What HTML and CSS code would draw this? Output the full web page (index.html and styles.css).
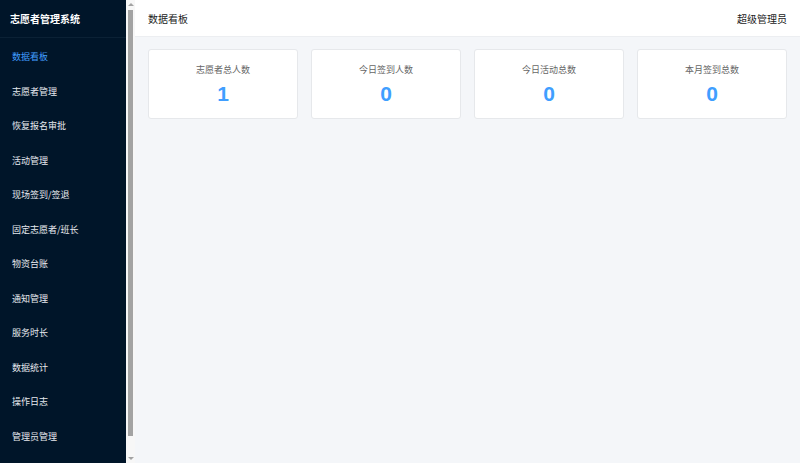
FILE: index.html
```html
<!DOCTYPE html>
<html lang="zh-CN">
<head>
  <meta charset="UTF-8" />
  <meta name="viewport" content="width=device-width, initial-scale=1" />
  <title>志愿者管理系统</title>
  <link rel="stylesheet" href="styles.css">
</head>
<body>

  <div class="layout">

    <aside class="sidebar">
      <nav class="side-nav">
        <div class="logo">志愿者管理系统</div>
        <ul class="menu">
          <li class="active">数据看板</li>
          <li>志愿者管理</li>
          <li>恢复报名审批</li>
          <li>活动管理</li>
          <li>现场签到/签退</li>
          <li>固定志愿者/班长</li>
          <li>物资台账</li>
          <li>通知管理</li>
          <li>服务时长</li>
          <li>数据统计</li>
          <li>操作日志</li>
          <li>管理员管理</li>
        </ul>
      </nav>
      <!-- side menu scroll track -->
      <div class="scroll-track">
        <span class="arrow up"></span>
        <span class="thumb"></span>
        <span class="arrow down"></span>
      </div>
    </aside>

    <main class="main">
      <div class="topbar">
        <span class="page-title">数据看板</span>
        <span class="user">超级管理员</span>
      </div>

      <div class="content">
        <div class="stats">
          <div class="stat-card">
            <div class="stat-label">志愿者总人数</div>
            <div class="stat-value">1</div>
          </div>
          <div class="stat-card">
            <div class="stat-label">今日签到人数</div>
            <div class="stat-value">0</div>
          </div>
          <div class="stat-card">
            <div class="stat-label">今日活动总数</div>
            <div class="stat-value">0</div>
          </div>
          <div class="stat-card">
            <div class="stat-label">本月签到总数</div>
            <div class="stat-value">0</div>
          </div>
        </div>
      </div>
    </main>

  </div>

</body>
</html>
```

FILE: styles.css
```css
:root {
  --side-bg: #001529;
  --side-line: #0b2135;
  --side-text: #e6e9ee;
  --accent: #409eff;
  --page-bg: #f4f6f9;
  --border: #e6e8eb;
  --text: #222;
  --muted: #666;
}

* {
  box-sizing: border-box;
}

html, body {
  height: 100%;
}

body {
  margin: 0;
  font-family: "Noto Sans CJK SC", "Noto Sans", sans-serif;
  color: var(--text);
  background: var(--page-bg);
  overflow: hidden;
}

.layout {
  display: flex;
  height: 100vh;
}

.sidebar {
  width: 135px;
  flex-shrink: 0;
  display: flex;
  background: var(--side-bg);
}

.side-nav {
  flex: 1;
  overflow: hidden;
}

.scroll-track {
  width: 9px;
  display: flex;
  flex-direction: column;
  align-items: center;
  background: #f7f7f7;
  padding: 3px 0;
}

.thumb {
  flex: 1;
  width: 5px;
  margin: 4px 0 21px;
  background: #a3a3a3;
}

.arrow {
  width: 0;
  height: 0;
  border-left: 3px solid transparent;
  border-right: 3px solid transparent;
}

.arrow.up {
  border-bottom: 3px solid #a3a3a3;
}

.arrow.down {
  border-top: 3px solid #a3a3a3;
}

.logo {
  height: 38px;
  line-height: 38px;
  padding-left: 10px;
  color: #fff;
  font-size: 10px;
  font-weight: bold;
  border-bottom: 1px solid var(--side-line);
}

.menu {
  list-style: none;
  margin: 0;
  padding: 2px 0 0;
}

.menu li {
  height: 34.5px;
  line-height: 34.5px;
  padding-left: 12px;
  font-size: 9px;
  color: var(--side-text);
  cursor: pointer;
  white-space: nowrap;
}

.menu li.active {
  color: var(--accent);
}

.main {
  flex: 1;
  display: flex;
  flex-direction: column;
  min-width: 0;
}

.topbar {
  height: 37px;
  display: flex;
  justify-content: space-between;
  align-items: center;
  padding: 0 13px;
  background: #fff;
  border-bottom: 1px solid #eceef1;
  font-size: 10px;
}

.content {
  padding: 12px 13px;
}

.stats {
  display: grid;
  grid-template-columns: repeat(4, 1fr);
  gap: 13px;
}

.stat-card {
  height: 70px;
  background: #fff;
  border: 1px solid var(--border);
  border-radius: 3px;
  text-align: center;
  padding-top: 14px;
}

.stat-label {
  font-size: 9px;
  color: var(--muted);
  line-height: 12px;
}

.stat-value {
  margin-top: 6px;
  font-family: "Liberation Sans", Arial, sans-serif;
  font-size: 21px;
  font-weight: bold;
  color: var(--accent);
  line-height: 24px;
}
```
